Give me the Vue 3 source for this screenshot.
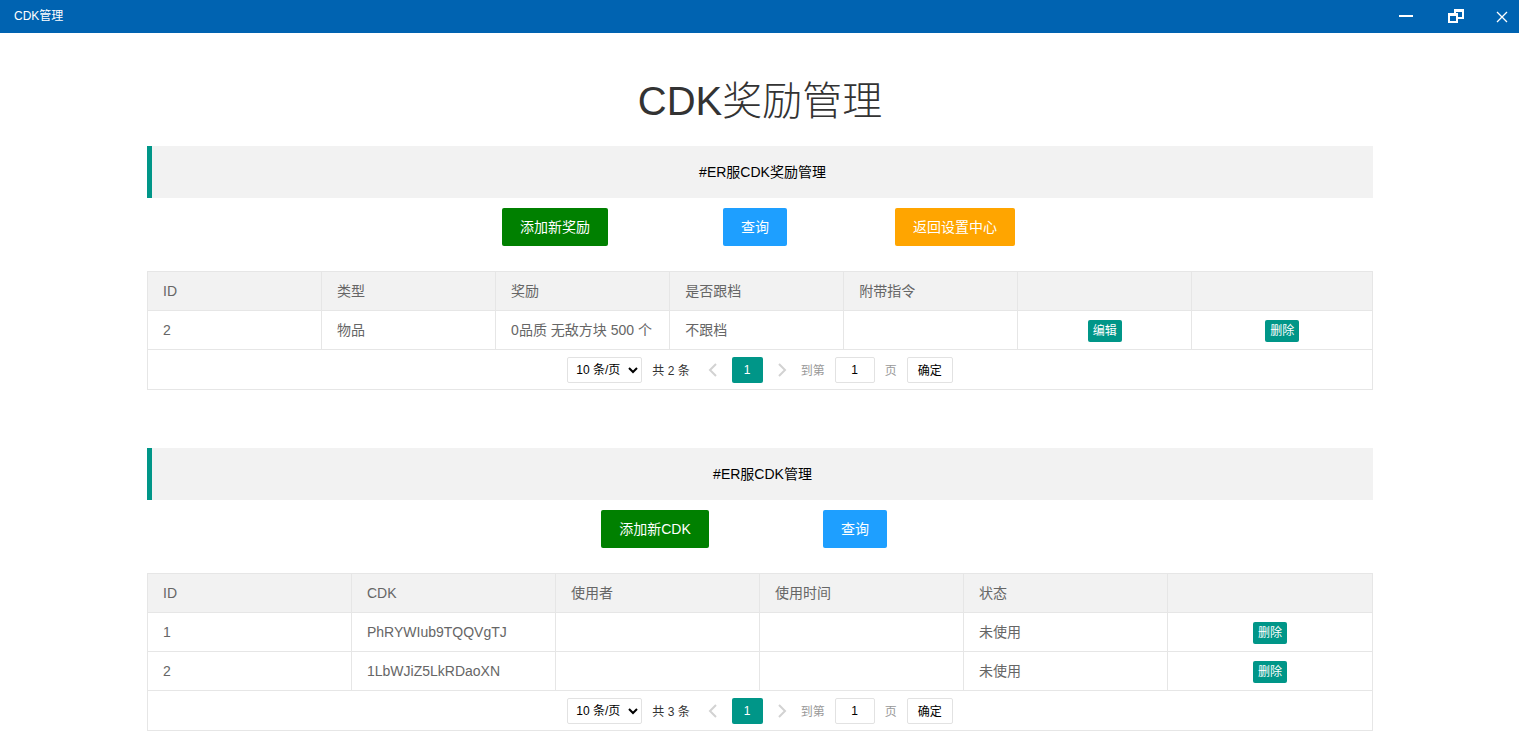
<script setup>
import { ref } from 'vue'

const sections = ref([
  {
    key: 'reward',
    title: '#ER服CDK奖励管理',
    actions: [
      { label: '添加新奖励', tone: 'green' },
      { label: '查询', tone: 'blue' },
      { label: '返回设置中心', tone: 'orange' }
    ],
    columns: ['ID', '类型', '奖励', '是否跟档', '附带指令', '', ''],
    rows: [['2', '物品', '0品质 无敌方块 500 个', '不跟档', '', { action: '编辑' }, { action: '删除' }]],
    total: 2,
    page: '1'
  },
  {
    key: 'cdk',
    title: '#ER服CDK管理',
    actions: [
      { label: '添加新CDK', tone: 'green' },
      { label: '查询', tone: 'blue' }
    ],
    columns: ['ID', 'CDK', '使用者', '使用时间', '状态', ''],
    rows: [
      ['1', 'PhRYWIub9TQQVgTJ', '', '', '未使用', { action: '删除' }],
      ['2', '1LbWJiZ5LkRDaoXN', '', '', '未使用', { action: '删除' }]
    ],
    total: 3,
    page: '1'
  }
])
</script>

<template>
  <div class="window">
    <header class="titlebar">
      <span class="caption">CDK管理</span>
      <div class="controls">
        <button type="button" aria-label="最小化">
          <svg width="18" height="18" viewBox="0 0 18 18"><path d="M2 8h14v2H2z" fill="#fff" /></svg>
        </button>
        <button type="button" aria-label="还原">
          <svg width="18" height="18" viewBox="0 0 18 18" fill="#fff" fill-rule="evenodd">
            <path d="M1 6h10v10H1zM3 9v5h6V9z" />
            <path d="M7 2h10v10h-6v-2h4V5H9v1H7z" />
          </svg>
        </button>
        <button type="button" class="close" aria-label="关闭">
          <svg width="18" height="18" viewBox="0 0 18 18"><path d="M4 5l10 10M14 5L4 15" stroke="#fff" stroke-width="1.3" fill="none" /></svg>
        </button>
      </div>
    </header>

    <main class="content">
      <h1>CDK奖励管理</h1>

      <section v-for="s in sections" :key="s.key" class="section">
        <h2>{{ s.title }}</h2>

        <div class="actions">
          <div v-for="a in s.actions" :key="a.label" class="slot">
            <button type="button" class="btn" :class="a.tone">{{ a.label }}</button>
          </div>
        </div>

        <div class="grid">
          <table :class="s.key">
            <thead>
              <tr><th v-for="(c, i) in s.columns" :key="i" scope="col">{{ c }}</th></tr>
            </thead>
            <tbody>
              <tr v-for="(row, r) in s.rows" :key="r">
                <td v-for="(cell, i) in row" :key="i" :class="{ tool: cell.action }">
                  <button v-if="cell.action" type="button" class="mini">{{ cell.action }}</button>
                  <template v-else>{{ cell }}</template>
                </td>
              </tr>
            </tbody>
          </table>

          <nav class="pager" aria-label="分页">
            <select aria-label="每页条数">
              <option>10 条/页</option>
              <option>20 条/页</option>
              <option>50 条/页</option>
            </select>
            <span class="total">共 {{ s.total }} 条</span>
            <button type="button" class="arrow" aria-label="上一页">
              <svg width="12" height="14" viewBox="0 0 12 14"><path d="M9 1L3 7l6 6" /></svg>
            </button>
            <button type="button" class="current">1</button>
            <button type="button" class="arrow" aria-label="下一页">
              <svg width="12" height="14" viewBox="0 0 12 14"><path d="M3 1l6 6-6 6" /></svg>
            </button>
            <label class="muted" :for="s.key + '-page'">到第</label>
            <input :id="s.key + '-page'" v-model="s.page" type="text" />
            <span class="muted">页</span>
            <button type="button" class="go">确定</button>
          </nav>
        </div>
      </section>
    </main>
  </div>
</template>

<style>
body {
  margin: 0;
  background: #fff;
}
</style>

<style scoped>
.window,
.window button,
.window input,
.window select {
  font-family: "Liberation Sans", "Noto Sans CJK SC", sans-serif;
}
.window *,
.window {
  box-sizing: border-box;
}
.window {
  color: #333;
  font-size: 14px;
}
button {
  margin: 0;
  padding: 0;
  border: 0;
  background: none;
  cursor: pointer;
}
.titlebar {
  display: flex;
  justify-content: space-between;
  padding: 0 8px 1px 14px;
  background: #0063b1;
  color: #fff;
  font-size: 12px;
}
.caption {
  line-height: 32px;
}
.controls {
  display: flex;
  align-items: center;
  gap: 32px;
}
.controls button {
  display: flex;
}
.controls .close {
  margin-left: -4px;
}
.content {
  padding: 38px 146px 23px 147px;
}
h1 {
  margin: 0 0 15px;
  font-size: 40px;
  font-weight: 300;
  line-height: 60px;
  text-align: center;
}
.section + .section {
  margin-top: 58px;
}
h2 {
  margin: 0;
  border-left: 5px solid #009688;
  background: #f2f2f2;
  color: #000;
  font-size: 14px;
  font-weight: 400;
  line-height: 52px;
  text-align: center;
}
.actions {
  display: flex;
  justify-content: center;
  padding: 10px 10px 25px 0;
}
.slot {
  display: flex;
  justify-content: center;
  width: 200px;
}
.btn {
  height: 38px;
  padding: 0 18px;
  border-radius: 2px;
  color: #fff;
  font-size: 14px;
  line-height: 38px;
}
.green { background: #008000; }
.blue { background: #1e9fff; }
.orange { background: #ffa500; }
.grid {
  border: 1px solid #e6e6e6;
}
table {
  width: 100%;
  border-collapse: separate;
  border-spacing: 0;
  table-layout: fixed;
  color: #666;
}
.reward th:not(:last-child) {
  width: 14.22%;
}
th,
td {
  height: 39px;
  padding: 0 15px;
  border-right: 1px solid #e6e6e6;
  border-bottom: 1px solid #e6e6e6;
  font-size: 14px;
  font-weight: 400;
  line-height: 28px;
  text-align: left;
  white-space: nowrap;
}
th {
  background: #f2f2f2;
}
th:last-child,
td:last-child {
  border-right: 0;
}
td.tool {
  text-align: center;
}
.mini {
  display: block;
  height: 22px;
  margin: 2px auto 0;
  padding: 0 5px;
  border-radius: 2px;
  background: #009688;
  color: #fff;
  font-size: 12px;
  line-height: 22px;
}
.pager {
  display: flex;
  align-items: center;
  justify-content: center;
  height: 39px;
  color: #333;
  font-size: 12px;
}
.pager select,
.pager input,
.go {
  height: 26px;
  border: 1px solid #e2e2e2;
  border-radius: 2px;
  background: #fff;
  color: #000;
  font-size: 12px;
}
.pager select {
  width: 75px;
  padding: 0 4px;
}
.total {
  margin: 0 10px;
}
.arrow {
  display: flex;
  justify-content: center;
  width: 26px;
}
.arrow path {
  fill: none;
  stroke: #d2d2d2;
  stroke-width: 2;
}
.current {
  width: 31px;
  height: 26px;
  margin: 0 6px;
  border-radius: 2px;
  background: #009688;
  color: #fff;
  font-size: 12px;
}
.muted {
  color: #999;
}
.arrow + .muted {
  margin-left: 6px;
}
.pager input {
  width: 40px;
  margin: 0 10px;
  padding: 0;
  text-align: center;
}
.go {
  margin-left: 10px;
  padding: 0 10px;
}
</style>
